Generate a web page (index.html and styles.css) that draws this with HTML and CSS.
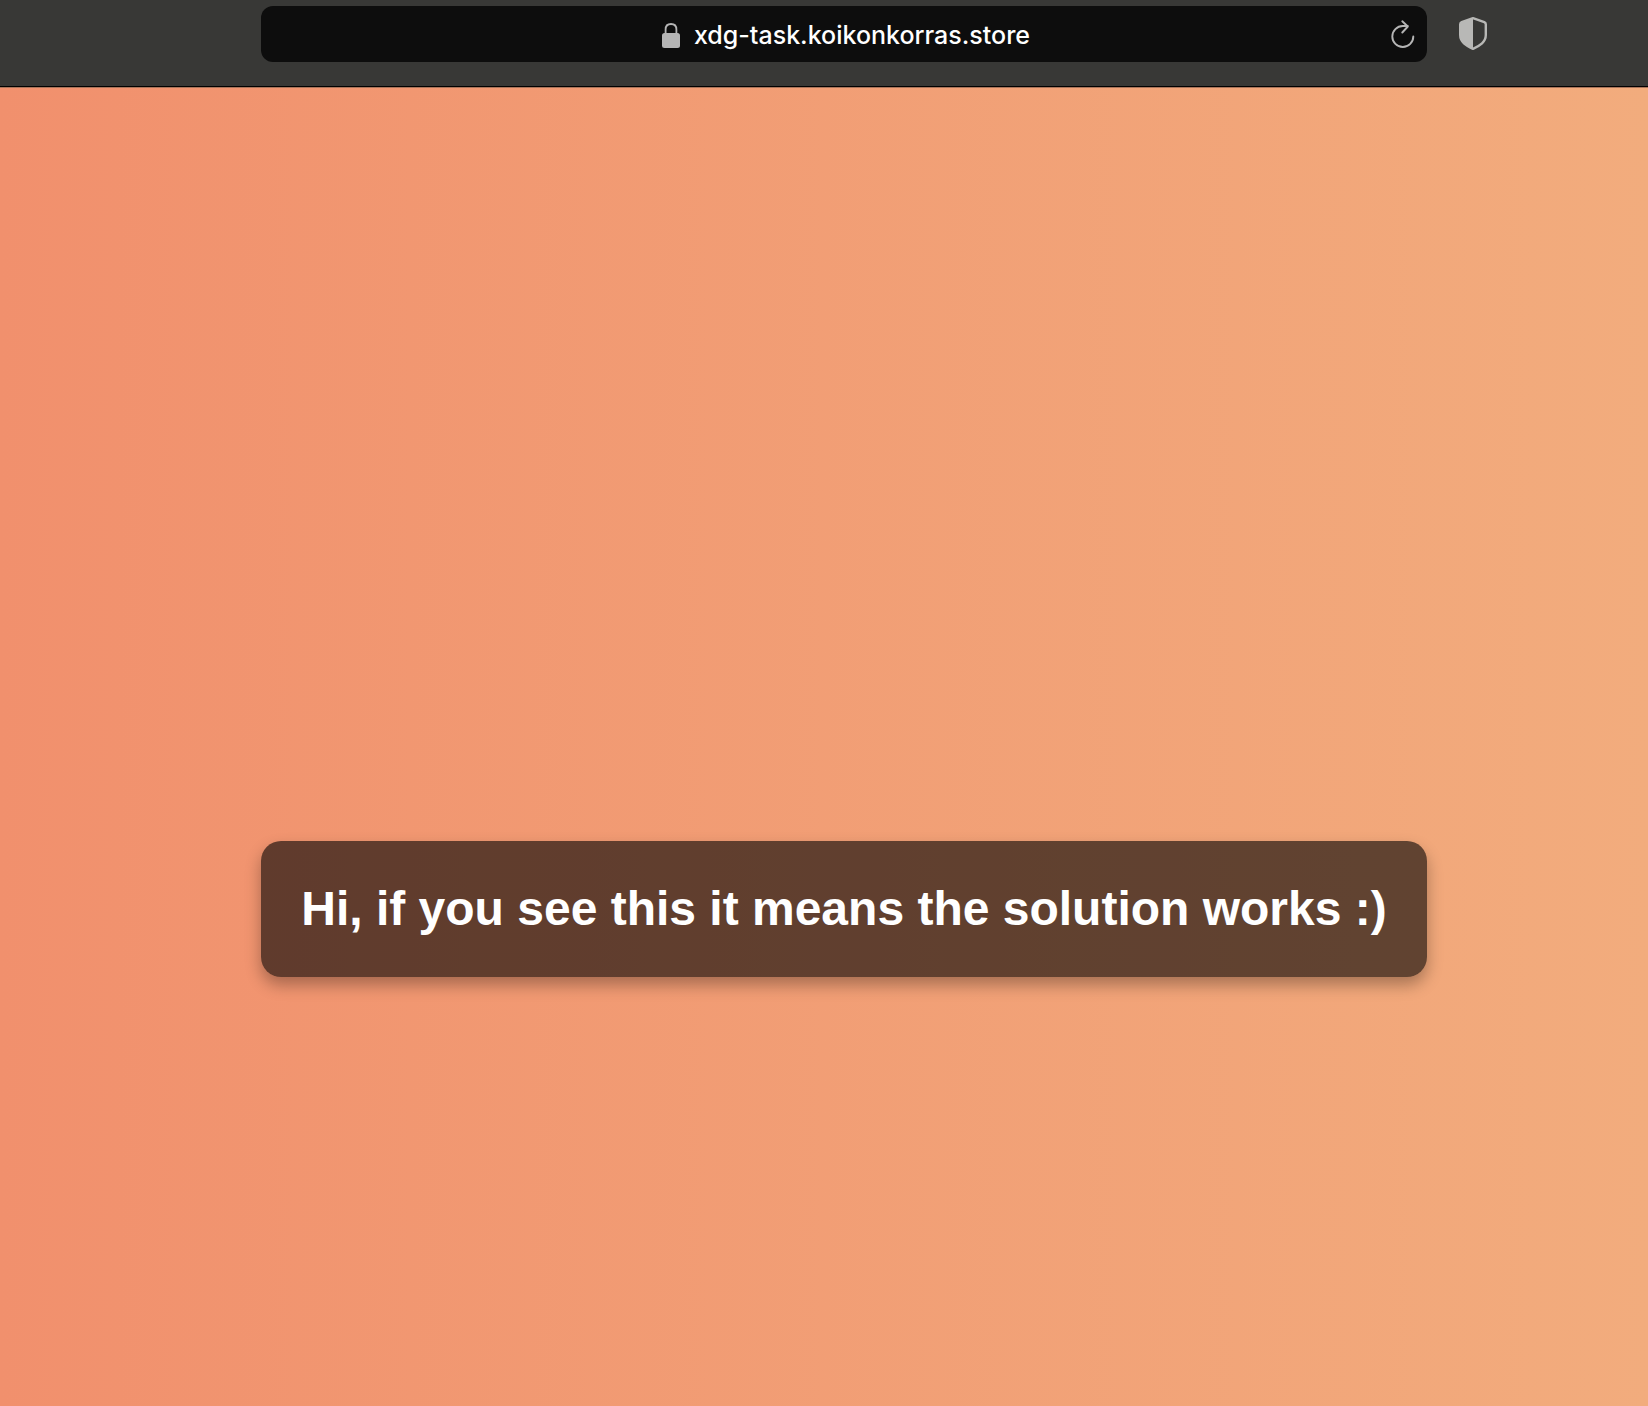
FILE: index.html
```html
<!DOCTYPE html>
<html lang="en">
<head>
<meta charset="utf-8">
<title>xdg-task.koikonkorras.store</title>
<link rel="stylesheet" href="styles.css">
</head>
<body>
<header class="toolbar">
  <div class="address">
    <span class="site">
      <svg class="lock" viewBox="0 0 18 25" aria-hidden="true"><path d="M3.600 11V6.500C3.600 2.800 6 1 9 1S14.400 2.800 14.400 6.500V11" fill="none" stroke="#b5b5b5" stroke-width="1.800"/><rect y="10" width="18" height="15" rx="2.500" fill="#b5b5b5"/></svg>
      <span class="host">xdg-task.koikonkorras.store</span>
    </span>
    <button class="icon-button reload" type="button" aria-label="Reload page">
      <svg width="24" height="28" viewBox="0 0 24 28" fill="none" stroke="#b5b5b5" stroke-width="1.900" stroke-linecap="round" stroke-linejoin="round" aria-hidden="true"><path d="M22.300 16.500A10.500 10.500 0 1 1 11.800 6H16.800M11.300 1.300L16.800 6.500L11.300 12.500"/></svg>
    </button>
  </div>
  <button class="icon-button shield" type="button" aria-label="Privacy report">
    <svg width="28" height="33" viewBox="0 0 28 33" aria-hidden="true"><path d="M14 1.200L25.300 5.200Q26.800 5.800 26.800 7.300V18C26.800 25 21 28.500 14 31.800C7 28.500 1.200 25 1.200 18V7.300Q1.200 5.800 2.700 5.200Z" fill="none" stroke="#b8b8b6" stroke-width="2.400" stroke-linejoin="round"/><path d="M14 1V32C7 28.500 1.200 25 1.200 18V7.300Q1.200 5.800 2.700 5.200Z" fill="#b8b8b6"/></svg>
  </button>
</header>
<main class="page">
  <h1 class="message">Hi, if you see this it means the solution works :)</h1>
</main>
</body>
</html>
```
FILE: styles.css
```css
* {
  box-sizing: border-box;
}

body {
  display: flex;
  flex-direction: column;
  min-height: 100vh;
  margin: 0;
  font-family: "Liberation Sans", Arial, sans-serif;
}

.toolbar {
  display: grid;
  grid-template-columns: 1fr minmax(0, 1166px) 1fr;
  align-items: start;
  padding: 6px 0 24px 40px;
  border-bottom: 1px solid #000;
  background: #383836;
}

.address {
  display: grid;
  grid-column: 2;
  grid-template-columns: 1fr auto 1fr;
  align-items: center;
  height: 56px;
  padding: 0 12px 0 16px;
  border-radius: 12px;
  background: #0d0d0d;
}

.site {
  display: flex;
  grid-column: 2;
  align-items: center;
  gap: 14px;
  padding-top: 2px;
}

.lock {
  width: 18px;
  height: 25px;
}

.host {
  color: #fff;
  font: 500 25px/32px Inter, sans-serif;
}

.icon-button {
  display: flex;
  padding: 0;
  border: 0;
  background: none;
}

.reload {
  justify-self: end;
}

.shield {
  margin: 11px 0 0 32px;
}

.page {
  display: flex;
  flex: 1;
  align-items: center;
  justify-content: center;
  padding: 324px 0 0 40px;
  border-top: 1px solid #a9745a;
  background: linear-gradient(to right, #f1906d, #f2ac7d);
}

.message {
  margin: 0;
  padding: 40px;
  border-radius: 20px;
  background: rgba(0, 0, 0, 0.6);
  box-shadow: 0 8px 16px rgba(0, 0, 0, 0.3);
  color: #fff;
  font-size: 48px;
  line-height: 56px;
}
```
